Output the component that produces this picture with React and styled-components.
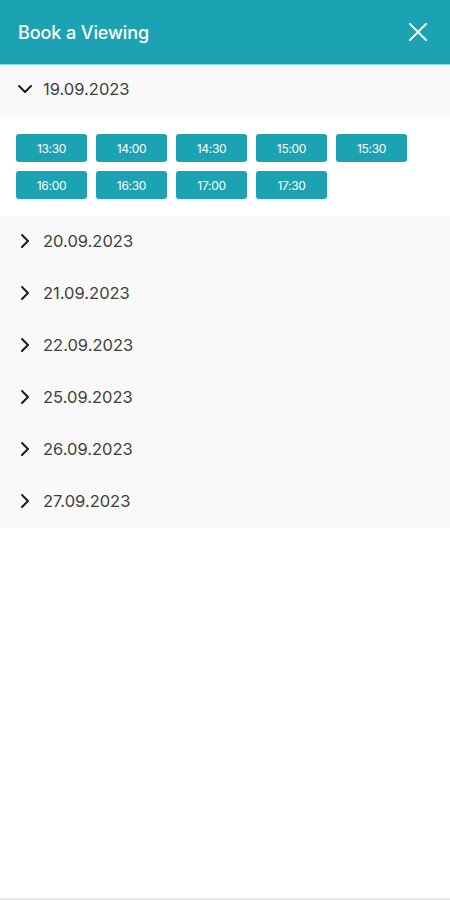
import { useState } from "react"
import styled, { createGlobalStyle } from "styled-components"

const GlobalStyle = createGlobalStyle`
  html, body {
    margin: 0;
    padding: 0;
    background: #fff;
  }
  body {
    font-family: "Inter", "Noto Sans", sans-serif;
  }
`

const Page = styled.div`
  display: flex;
  flex-direction: column;
  height: 900px;
  background: #fff;
`

const Header = styled.header`
  display: flex;
  align-items: center;
  justify-content: space-between;
  height: 65px;
  padding: 0 22px 0 18px;
  background: #1ba3b4;
  border-bottom: 1px solid #8fd7e0;
  box-sizing: border-box;
  flex-shrink: 0;
`

const Title = styled.h1`
  margin: 0;
  font-size: 18px;
  font-weight: 500;
  color: #fff;
  letter-spacing: -0.1px;
`

const CloseButton = styled.button`
  display: flex;
  padding: 0;
  border: 0;
  background: none;
  cursor: pointer;
`

const List = styled.div`
  display: flex;
  flex-direction: column;
`

const DayRow = styled.button`
  display: flex;
  align-items: center;
  gap: 10px;
  height: 52px;
  padding: 0 0 4px 17px;
  border: 0;
  border-top: ${(p) => (p.first ? "0" : "1px solid #ffffff")};
  background: #f9f9f9;
  font-family: inherit;
  font-size: 16.5px;
  color: #404040;
  text-align: left;
  cursor: pointer;
  box-sizing: border-box;
`

const Slots = styled.div`
  display: grid;
  grid-template-columns: repeat(5, 71px);
  gap: 9px;
  padding: 17px 16px 17px;
`

const Slot = styled.button`
  height: 28px;
  padding: 0;
  border: 0;
  border-radius: 3px;
  background: #1ba3b4;
  color: #fff;
  font-family: inherit;
  font-size: 12px;
  letter-spacing: -0.3px;
  cursor: pointer;
`

const Spacer = styled.div`
  flex: 1;
`

const Footer = styled.div`
  height: 2px;
  background: #e6e8e8;
`

const Chevron = ({ open }) => (
  <svg width="16" height="16" viewBox="0 0 16 16" fill="none">
    <path
      d={open ? "M2 5 L8 11 L14 5" : "M5 2 L11 8 L5 14"}
      stroke="#1a1a1a"
      strokeWidth="2"
      strokeLinecap="round"
      strokeLinejoin="round"
    />
  </svg>
)

const days = [
  { date: "19.09.2023", slots: ["13:30", "14:00", "14:30", "15:00", "15:30", "16:00", "16:30", "17:00", "17:30"] },
  { date: "20.09.2023", slots: [] },
  { date: "21.09.2023", slots: [] },
  { date: "22.09.2023", slots: [] },
  { date: "25.09.2023", slots: [] },
  { date: "26.09.2023", slots: [] },
  { date: "27.09.2023", slots: [] },
]

export default function App() {
  const [open, setOpen] = useState(0)

  return (
    <Page>
      <GlobalStyle />
      <Header>
        <Title>Book a Viewing</Title>
        <CloseButton aria-label="Close">
          <svg width="20" height="20" viewBox="0 0 20 20" fill="none">
            <path d="M2 2 L18 18 M18 2 L2 18" stroke="#fff" strokeWidth="1.8" strokeLinecap="round" />
          </svg>
        </CloseButton>
      </Header>
      <List>
        {days.map((d, i) => (
          <div key={d.date} style={{ display: "contents" }}>
            <DayRow first={i === 0} onClick={() => setOpen(open === i ? -1 : i)}>
              <Chevron open={open === i} />
              {d.date}
            </DayRow>
            {open === i && (
              <Slots>
                {d.slots.map((s) => (
                  <Slot key={s}>{s}</Slot>
                ))}
              </Slots>
            )}
          </div>
        ))}
      </List>
      <Spacer />
      <Footer />
    </Page>
  )
}
